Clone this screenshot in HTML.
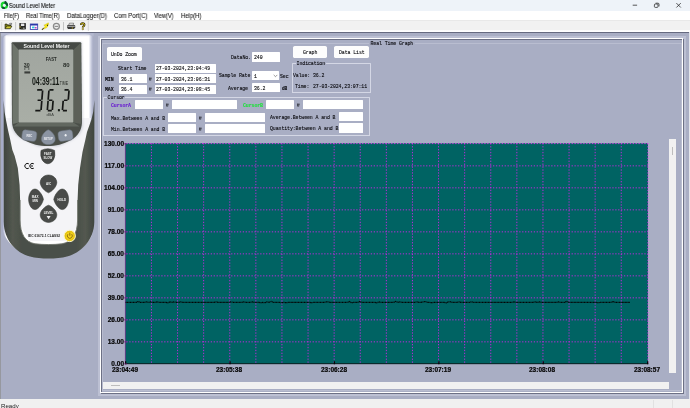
<!DOCTYPE html>
<html>
<head>
<meta charset="utf-8">
<title>Sound Level Meter</title>
<style>
*{box-sizing:border-box;margin:0;padding:0}
html,body{width:690px;height:408px;overflow:hidden;background:#a9aec4;font-family:"Liberation Sans",sans-serif}
.abs{position:absolute}
#titlebar{position:absolute;left:0;top:0;width:690px;height:11px;background:#eef3f9}
#menubar{position:absolute;left:0;top:11px;width:690px;height:9px;background:#ffffff}
#toolbar{position:absolute;left:0;top:20px;width:690px;height:12px;background:linear-gradient(#d6d6d6 0,#d6d6d6 0.3px,#f1f1f1 0.6px,#f1f1f1 10.2px,#ffffff 10.6px,#ffffff 12px)}
#tbline{z-index:5;position:absolute;left:0;top:31.5px;width:689px;height:0.9px;background:#666a80}
#main{position:absolute;left:0;top:32px;width:689px;height:366.9px;background:#a9aec4}
#rightedge{position:absolute;left:688.8px;top:32px;width:1.2px;height:366.9px;background:#e4e6ec}
#status{position:absolute;left:0;top:398.7px;width:690px;height:9.3px;background:#f0f0f0}
.t,.m,.yl,.xl{will-change:transform}
.t{position:absolute;white-space:pre;color:#111;line-height:1}
.menu{font-size:6.3px;top:12.9px;color:#0e0e0e;-webkit-text-stroke:0.06px}
.m{position:absolute;white-space:pre;font-family:"Liberation Mono",monospace;font-size:4.9px;letter-spacing:-0.09px;line-height:6px;color:#08080c;margin-top:1.1px;transform:scaleY(1.25);transform-origin:50% 55%;-webkit-text-stroke:0.09px}
.at{transform:scaleY(0.95)!important;font-weight:bold;font-size:4.2px!important;margin-top:-0.2px!important}
.in{position:absolute;background:#fff;border-radius:0.5px}
.btn{position:absolute;background:#fdfdfd;border-radius:1.6px;box-shadow:0 0 0.5px rgba(120,125,150,.6)}
.gb{position:absolute;border:0.8px solid rgba(226,229,240,.74);border-radius:0.5px}
.yl{-webkit-text-stroke:0.22px #000;position:absolute;font-weight:bold;font-size:6.5px;line-height:7px;text-align:right;width:30px;left:94.1px;color:#0a0a0a}
.xl{-webkit-text-stroke:0.22px #000;position:absolute;font-weight:bold;font-size:6.5px;line-height:7px;text-align:center;width:40px;top:366.2px;margin-left:-0.7px;color:#0a0a0a}
</style>
</head>
<body>
<div id="titlebar"></div>
<div id="menubar"></div>
<div id="toolbar"></div>
<div id="main"></div>
<div id="tbline"></div>
<div id="rightedge"></div>
<div id="status"></div>


<!-- DEVICE -->
<div class="abs" style="left:0;top:32.3px;width:0.9px;height:366.6px;background:#96989f"></div>
<svg class="abs" style="left:0;top:32px" width="100" height="234" viewBox="0 32 100 234">
<defs>
<linearGradient id="bodyg" gradientUnits="userSpaceOnUse" x1="1.2" y1="0" x2="95.3" y2="0">
<stop offset="0" stop-color="#a3a9c8"/><stop offset="0.012" stop-color="#a3a9c8"/><stop offset="0.03" stop-color="#c4c8dc"/><stop offset="0.052" stop-color="#ffffff"/>
<stop offset="0.5" stop-color="#ffffff"/><stop offset="0.93" stop-color="#ffffff"/><stop offset="0.955" stop-color="#c9cde0"/><stop offset="0.975" stop-color="#a9aec6"/><stop offset="1" stop-color="#a9aec4"/>
</linearGradient>
<linearGradient id="holg" gradientUnits="userSpaceOnUse" x1="3.5" y1="0" x2="94.5" y2="0">
<stop offset="0" stop-color="#3f443e"/><stop offset="0.1" stop-color="#535850"/><stop offset="0.2" stop-color="#4a4f48"/>
<stop offset="0.8" stop-color="#4a4f48"/><stop offset="0.9" stop-color="#535850"/><stop offset="1" stop-color="#3f443e"/>
</linearGradient>
<linearGradient id="lcdg" x1="0" y1="0" x2="0" y2="1">
<stop offset="0" stop-color="#a1a6a0"/><stop offset="1" stop-color="#a9aea6"/>
</linearGradient>
<linearGradient id="topfade" x1="0" y1="0" x2="0" y2="1"><stop offset="0" stop-color="#a9aec8" stop-opacity="1"/><stop offset="0.3" stop-color="#b4b9d2" stop-opacity="0.85"/><stop offset="1" stop-color="#d0d4e4" stop-opacity="0"/></linearGradient>
<filter id="soft" x="-5%" y="-5%" width="110%" height="110%"><feGaussianBlur stdDeviation="0.35"/></filter>
<filter id="soft2" x="-5%" y="-5%" width="110%" height="110%"><feGaussianBlur stdDeviation="0.8"/></filter>
</defs>
<g filter="url(#soft)">
<!-- body -->
<path d="M1.6 222 V44 Q1.6 33.8 12.5 33.8 H84.5 Q95 33.8 95 44 V222 C95 240 80 252 66 255 H32 C16 252 1.6 240 1.6 222 Z" fill="url(#bodyg)"/>
<rect x="1" y="32.5" width="92.6" height="4.4" fill="url(#topfade)"/>
<!-- shading of body near bezel bottom -->
<path d="M6 118 L10 140 L17 168 L19.5 200 L19.5 225 L30 241 H68 L78 225 L78 200 L80 168 L86 140 L91 118 Z" fill="#f4f4f7"/>
<!-- holster -->
<path d="M3.6 100 L3.7 222 C4 240 16 253 30 256.5 C40 259.2 57 259.2 67 256.5 C81 253 94 240 94.3 222 L94.4 100
 L93.2 112 L91.3 120 L87 132 L85.3 140 L82.5 152 L80 168 L78.2 185 L77.6 200 L77.6 220 C77.4 234 72 242 62 243.8 C54 244.8 43 244.8 35 243.8 C25 242 20.2 234 20.1 220 L20.1 200 L19.6 185 L17.8 168 L14.7 156 L12.4 150 L10.3 140 L8 130 L6 120 L4.6 112 Z" fill="url(#holg)"/>
<path d="M77.6 200 L77.6 220 C77.4 234 72 242 62 243.8 C54 244.8 43 244.8 35 243.8 C25 242 20.2 234 20.1 220 L20.1 200" fill="none" stroke="#6f746c" stroke-width="0.9"/>
<!-- bezel shadow -->
<path d="M11.4 42 H82 L83 124 C83 132 78 137 72 140 L58 146.5 H38 L24 140 C17 137 11.4 132 11.4 124 Z" fill="#c9ccd4" filter="url(#soft2)" opacity="0.8"/>
<!-- bezel -->
<path d="M12.4 42.3 H80.4 Q81.2 42.3 81.3 43.2 L82 122 C81.8 130 78 136 71 140 C63 144.4 56 146 47.5 146 C39 146 32 144.4 24 140 C17 136 12.2 130 12 122 L11.6 43.2 Q11.7 42.3 12.4 42.3 Z" fill="#4b504a"/>
<!-- bezel bevels -->
<path d="M12.4 43 L18.6 49.6 V122.6 L12.6 124 Z" fill="#6e746c"/>
<path d="M80.6 43 L73.3 49.6 V122.6 L81.6 124 Z" fill="#5b6159"/>
<path d="M12.6 42.8 H80.4 L73.3 49.7 H18.6 Z" fill="#454a45"/>
<path d="M18.6 122.4 H73.3 L79.5 126.6 H13.4 Z" fill="#626860"/>
<!-- LCD -->
<rect x="18.6" y="49.6" width="54.7" height="73" rx="0.8" fill="url(#lcdg)"/>
<!-- top text -->
<text x="46.5" y="47.9" font-family="Liberation Sans" font-weight="bold" font-size="5.4" fill="#f4f4f4" text-anchor="middle" textLength="46" lengthAdjust="spacingAndGlyphs">Sound Level Meter</text>
<!-- LCD contents -->
<g fill="#161a16" font-family="Liberation Sans">
<text x="51.2" y="60.8" font-size="5" font-weight="bold" text-anchor="middle" textLength="11" lengthAdjust="spacingAndGlyphs" fill="#2a2e2a">FAST</text>
<text x="23.8" y="66.7" font-size="6" font-weight="bold" textLength="5.9" lengthAdjust="spacingAndGlyphs" fill="#2a2e2a">30</text>
<text x="63" y="66.7" font-size="6" font-weight="bold" textLength="6.7" lengthAdjust="spacingAndGlyphs" fill="#2a2e2a">80</text>
<path d="M24.8 70 V67.4 H28.8 V70" fill="none" stroke="#2a2e2a" stroke-width="0.6"/>
<rect x="24.4" y="71.4" width="5.8" height="2.1" fill="#3a3e3a"/>
<text x="32" y="84.7" font-size="10.6" font-weight="bold" textLength="27.3" lengthAdjust="spacingAndGlyphs">04:39:11</text>
<text x="59.7" y="84.7" font-size="5.6" textLength="8.3" lengthAdjust="spacingAndGlyphs" fill="#2a2e2a">TIME</text>
<text x="46.4" y="116.3" font-size="3.6" textLength="7.4" lengthAdjust="spacingAndGlyphs" fill="#3a3e3a">dBA</text>
</g>
<!-- 7-seg digits -->
<g fill="none" stroke="#151915" stroke-width="1.7" stroke-linecap="butt">
<path transform="translate(36.0,110.7) skewX(-4.6)" d="M0.45 -20.9 H4.55 M5.0 -20.15 V-11.0 M5.0 -9.899999999999999 V-0.75 M0.45 0 H4.55 M0.75 -10.45 H4.25 M-0.5 -20.9 H0.75 M-0.7 0 H0.75"/>
<path transform="translate(47.3,110.7) skewX(-4.6)" d="M0.45 -20.9 H4.55 M0 -20.15 V-11.0 M0 -9.899999999999999 V-0.75 M0.45 0 H4.55 M5.0 -9.899999999999999 V-0.75 M0.75 -10.45 H4.25"/>
<path transform="translate(62.4,110.7) skewX(-4.6)" d="M0.45 -20.9 H4.55 M5.0 -20.15 V-11.0 M0.75 -10.45 H4.25 M0 -9.899999999999999 V-0.75 M0.45 0 H4.55"/>
</g>
<rect x="57.9" y="109.1" width="2" height="2.2" fill="#171b17"/>
<!-- small buttons -->
<g fill="#8b94a2" stroke="#6c7480" stroke-width="0.5">
<rect x="22" y="130.4" width="14.6" height="10.4" rx="3.6" transform="rotate(8 29.3 135.6)"/>
<rect x="58.2" y="130.4" width="14.6" height="10.4" rx="3.6" transform="rotate(-8 65.5 135.6)"/>
<path d="M48.3 129.8 C51 130.6 55.2 135 55.2 139 C55.2 142.6 52 144.6 48.3 144.6 C44.6 144.6 41.4 142.6 41.4 139 C41.4 135 45.6 130.6 48.3 129.8 Z"/>
</g>
<g fill="#eef0f4" font-family="Liberation Sans" font-weight="bold" font-size="2.8" text-anchor="middle">
<text x="29.4" y="136.6">REC</text>
<text x="48.3" y="140">SETUP</text>
<ellipse cx="65.6" cy="135.3" rx="1" ry="1.3"/>
</g>
<!-- FAST/SLOW -->
<path d="M41 150.4 Q47.8 147 54.6 150.4 Q55.6 156 53.4 160 Q51 163.8 47.8 163.8 Q44.6 163.8 42.2 160 Q40 156 41 150.4 Z" fill="#474a47" stroke="#2e312e" stroke-width="0.5"/>
<g fill="#f0f0f0" font-family="Liberation Sans" font-weight="bold" font-size="2.9" text-anchor="middle">
<text x="47.8" y="154.8">FAST</text><text x="47.8" y="159">SLOW</text>
</g>
<!-- CE -->
<g fill="none" stroke="#101010" stroke-width="1">
<path d="M28.8 163.8 A2.6 2.6 0 1 0 28.8 168.2"/>
<path d="M33.8 163.8 A2.6 2.6 0 1 0 33.8 168.2 M30.6 166 H33"/>
</g>
<!-- round buttons -->
<g fill="#494c49" stroke="#2f322f" stroke-width="0.5">
<path d="M48.5 175 C53 175 56.8 178.4 56.8 182.6 C56.8 186.6 52 191.6 48.5 192.8 C45 191.6 40.2 186.6 40.2 182.6 C40.2 178.4 44 175 48.5 175 Z"/>
<path d="M48.5 222.4 C53 222.4 56.8 219 56.8 214.8 C56.8 210.8 52 206.2 48.5 205.2 C45 206.2 40.2 210.8 40.2 214.8 C40.2 219 44 222.4 48.5 222.4 Z"/>
<path d="M28.6 199.3 C28.6 194 31.4 189 35 189 C38.6 189 42.8 195.4 43.4 199.3 C42.8 203.2 38.6 209.6 35 209.6 C31.4 209.6 28.6 204.6 28.6 199.3 Z"/>
<path d="M68.6 199.3 C68.6 194 65.8 189 62.2 189 C58.6 189 54.4 195.4 53.8 199.3 C54.4 203.2 58.6 209.6 62.2 209.6 C65.8 209.6 68.6 204.6 68.6 199.3 Z"/>
</g>
<g fill="#f0f0f0" font-family="Liberation Sans" font-weight="bold" font-size="3" text-anchor="middle">
<text x="48.5" y="185">A/C</text>
<text x="35.2" y="198">MAX</text><text x="35.2" y="202.4">MIN</text>
<text x="61.8" y="200.6">HOLD</text>
<text x="48.6" y="214.4">LEVEL</text>
<path d="M46.6 216 H50.6 L48.6 219.2 Z"/>
</g>
<text x="28.2" y="236.8" font-family="Liberation Sans" font-weight="bold" font-size="2.9" fill="#222" textLength="32" lengthAdjust="spacingAndGlyphs">IEC 61672-1 CLASS2</text>
<!-- power -->
<circle cx="69.7" cy="235.9" r="5.7" fill="#f2d21c" stroke="#fbf6d0" stroke-width="1"/>
<circle cx="69.7" cy="235.9" r="4.4" fill="#f4d31a" stroke="#c9a70e" stroke-width="0.5"/>
<path d="M67.9 234.2 A2.5 2.5 0 1 0 71.7 234.2 M69.8 232.6 V235.8" fill="none" stroke="#6a4a10" stroke-width="0.7"/>
</g>
</svg>


<!-- ICONS -->
<svg class="abs" style="left:0;top:0" width="690" height="33" viewBox="0 0 690 33">
<!-- app icon -->
<g fill="none">
<circle cx="4.35" cy="5.35" r="2.7" stroke="#16d62c" stroke-width="2.1"/>
<path d="M4.35 2.65 A2.7 2.7 0 0 1 7.05 5.8" stroke="#0f4a36" stroke-width="2.1"/>
<path d="M2.2 7.1 A2.7 2.7 0 0 0 4.8 8" stroke="#0f4a36" stroke-width="2.1"/>
<path d="M4.9 1.2 L6.3 0.9 L6 2.6 Z" fill="#082818"/>
</g>
<!-- window controls -->
<g stroke="#222" stroke-width="0.75" fill="none">
<path d="M632.7 5.2 H637.1"/>
<rect x="654.4" y="4" width="3.6" height="3.4" rx="0.9"/>
<path d="M655.6 3.2 H658 Q659 3.2 659 4.2 V6.4"/>
<path d="M676.4 3.1 L680.8 7.5 M680.8 3.1 L676.4 7.5"/>
</g>
<!-- toolbar gripper + separators -->
<path d="M1.6 22 V30.4" stroke="#c4c4c4" stroke-width="0.5"/>
<path d="M15.6 22 V30.4 M63.5 22 V30.4" stroke="#a8a8a8" stroke-width="0.6"/>
<path d="M88.3 20.6 V31" stroke="#c2c2c2" stroke-width="0.6"/>
<!-- open folder -->
<g>
<path d="M5.1 28.6 V24.1 H7 L7.6 24.9 H10.5 V26.2" fill="#85851a" stroke="#1c1c08" stroke-width="0.7"/>
<path d="M5.1 28.7 L6.7 26 H11.9 L10.3 28.7 Z" fill="#d2cc34" stroke="#1c1c08" stroke-width="0.7"/>
<path d="M9.2 23.6 Q10.6 22.8 11.4 24 M11.6 22.9 V24.3 H10.3" fill="none" stroke="#222" stroke-width="0.5"/>
</g>
<!-- save -->
<g>
<rect x="19.4" y="23.1" width="6.4" height="6.2" fill="#141414"/>
<rect x="20.8" y="23.5" width="3.6" height="2.6" fill="#e6e6e6"/>
<rect x="20.8" y="27.3" width="3.6" height="2" fill="#3c3c30"/>
<rect x="23.5" y="27.5" width="0.9" height="1.6" fill="#d8d8d8"/>
<rect x="19.6" y="26" width="0.9" height="1.8" fill="#b8a830"/>
</g>
<!-- window -->
<g>
<rect x="30.3" y="24" width="7.4" height="5.5" fill="#ffffff" stroke="#2a36a8" stroke-width="0.8"/>
<rect x="30.3" y="24" width="7.4" height="1.5" fill="#2a36a8"/>
<rect x="32" y="26.6" width="2.6" height="1.7" fill="#28c8e0"/>
<rect x="34.8" y="26.9" width="1.8" height="1.6" fill="#c040c0"/>
</g>
<!-- lightning -->
<g>
<path d="M48.4 22.8 L43.8 25.2 L45.3 26.2 L42.1 29.8 L46.4 27.8 L47.2 27.2 L48.6 24.2 Z" fill="#fbea10" stroke="#b8a410" stroke-width="0.35"/>
<path d="M42.1 29.8 L43.6 27.9" stroke="#151515" stroke-width="0.9"/>
<rect x="46.9" y="24.7" width="1.1" height="1.1" fill="#1a1a1a"/>
</g>
<!-- circle minus -->
<circle cx="56.4" cy="26.3" r="3.0" fill="#ececec" stroke="#8a8a8a" stroke-width="1.25"/>
<path d="M54.6 26.4 H58.2" stroke="#8a8a8a" stroke-width="1.1"/>
<!-- printer -->
<g>
<path d="M68.6 25.2 L69.4 23.2 H73.6 L73.2 25.2 Z" fill="#f4f4f4" stroke="#333" stroke-width="0.5"/>
<path d="M67.2 25.6 Q67.2 25 68 25 H74.4 Q75.2 25 75.2 25.8 V27.6 L74 28.9 H68 L67.2 27.6 Z" fill="#3a3a3a"/>
<path d="M67.6 26.3 H74.8" stroke="#c4c4c4" stroke-width="0.9"/>
<rect x="71.8" y="27.6" width="1.3" height="0.8" fill="#e8c820"/>
</g>
<!-- question -->
<g>
<path d="M81 24.9 Q81 23.3 82.7 23.3 Q84.4 23.3 84.4 24.8 Q84.4 25.8 83.4 26.3 Q82.8 26.7 82.8 27.6" fill="none" stroke="#2a2408" stroke-width="2.0"/>
<path d="M81 24.9 Q81 23.3 82.7 23.3 Q84.4 23.3 84.4 24.8 Q84.4 25.8 83.4 26.3 Q82.8 26.7 82.8 27.6" fill="none" stroke="#f0d820" stroke-width="0.8"/>
<circle cx="82.8" cy="29" r="0.85" fill="#f0d820" stroke="#3a3010" stroke-width="0.4"/>
</g>
</svg>


<div class="abs" style="left:653.4px;top:399.5px;width:0.6px;height:8.5px;background:#e1e1e1"></div>
<div class="abs" style="left:672.2px;top:399.5px;width:0.6px;height:8.5px;background:#e1e1e1"></div>

<!-- TITLE -->
<div class="t" style="left:9.2px;top:3.25px;font-size:6.3px;color:#0a0a0a;transform:scaleX(0.872);transform-origin:0 0;-webkit-text-stroke:0.08px">Sound Level Meter</div>
<!-- MENU -->
<div class="t menu" style="left:3.7px;transform:scaleX(0.83);transform-origin:0 0">File(F)</div>
<div class="t menu" style="left:25.8px;transform:scaleX(0.905);transform-origin:0 0">Real Time(R)</div>
<div class="t menu" style="left:66.7px;transform:scaleX(0.96);transform-origin:0 0">DataLogger(D)</div>
<div class="t menu" style="left:113.7px;transform:scaleX(0.948);transform-origin:0 0">Com Port(C)</div>
<div class="t menu" style="left:154.2px;transform:scaleX(0.884);transform-origin:0 0">View(V)</div>
<div class="t menu" style="left:180.8px;transform:scaleX(0.94);transform-origin:0 0">Help(H)</div>
<div class="t" style="left:1px;top:402.6px;font-size:6px;color:#1a1a1a;transform:scaleX(1.02);transform-origin:0 0">Ready</div>

<!-- PANEL FRAME -->
<div class="abs" style="left:98px;top:36.4px;width:588px;height:359.2px;background:#bcc0d3"></div>
<div class="abs" style="left:100.8px;top:39.3px;width:583.3px;height:354.6px;border:0.9px solid #6c7085;background:#a9aec4"></div>
<div class="abs" style="left:99.6px;top:38.2px;width:583.6px;height:354.8px;border:1.2px solid #ffffff"></div>
<!-- group line -->
<div class="abs" style="left:102px;top:43px;width:680.2px;height:0"></div>
<div class="abs" style="left:102px;top:43px;width:579.6px;height:348.4px;border:0.9px solid #b9bdd0"></div>
<div class="m" style="left:369px;top:39.6px;background:#a9aec4;padding:0 1.5px">Real Time Graph</div>


<!-- FORM CONTROLS -->
<div class="btn" style="left:107.2px;top:47.2px;width:35px;height:13.6px"></div>
<div class="m" style="left:111.4px;top:51.2px">UnDo Zoom</div>

<div class="m" style="left:117.7px;top:65.4px">Start Time</div>
<div class="in" style="left:155px;top:64px;width:61.2px;height:8.6px"></div>
<div class="m" style="left:155.7px;top:65.4px">27-03-2024,23:04:49</div>

<div class="m" style="left:104.8px;top:76px;font-weight:bold">MIN</div>
<div class="in" style="left:119.2px;top:74.3px;width:27.7px;height:9px"></div>
<div class="m" style="left:121px;top:76px">36.1</div>
<div class="m at" style="left:149.3px;top:76.3px">@</div>
<div class="in" style="left:155px;top:74.3px;width:61.2px;height:9px"></div>
<div class="m" style="left:155.7px;top:76px">27-03-2024,23:06:31</div>

<div class="m" style="left:104.8px;top:86.2px;font-weight:bold">MAX</div>
<div class="in" style="left:119.2px;top:84.7px;width:27.7px;height:9px"></div>
<div class="m" style="left:121px;top:86.2px">36.4</div>
<div class="m at" style="left:149.3px;top:86.5px">@</div>
<div class="in" style="left:155px;top:84.7px;width:61.2px;height:9px"></div>
<div class="m" style="left:155.7px;top:86.2px">27-03-2024,23:08:45</div>

<div class="m" style="left:230.7px;top:54.4px">DataNo.</div>
<div class="in" style="left:251.8px;top:52.3px;width:28.3px;height:9.3px"></div>
<div class="m" style="left:253.6px;top:54.4px">240</div>

<div class="m" style="left:219.4px;top:72.3px">Sample Rate</div>
<div class="in" style="left:252.3px;top:71px;width:27.2px;height:8.8px"></div>
<div class="m" style="left:254px;top:72.5px">1</div>
<svg class="abs" style="left:272.5px;top:73.6px" width="5" height="4" viewBox="0 0 5 4"><path d="M0.7 0.9 L2.5 2.7 L4.3 0.9" fill="none" stroke="#555" stroke-width="0.6"/></svg>
<div class="m" style="left:280.3px;top:73.4px">Sec</div>

<div class="m" style="left:228.4px;top:84.8px">Average</div>
<div class="in" style="left:251.8px;top:83.3px;width:28.3px;height:9px"></div>
<div class="m" style="left:253.6px;top:84.8px">36.2</div>
<div class="m" style="left:282.2px;top:85.4px;font-weight:bold;font-size:4.4px">dB</div>

<div class="btn" style="left:292.7px;top:46.2px;width:34.2px;height:11.6px"></div>
<div class="m" style="left:302.6px;top:49.2px">Graph</div>
<div class="btn" style="left:334.4px;top:46.2px;width:34.2px;height:11.6px"></div>
<div class="m" style="left:338.8px;top:49.2px">Data List</div>

<!-- Indication group -->
<div class="gb" style="left:292.4px;top:63.4px;width:78.3px;height:29.2px"></div>
<div class="m" style="left:295.6px;top:60.4px;background:#a9aec4;padding:0 0.6px">Indication</div>
<div class="m" style="left:293.4px;top:72.2px">Value: 36.2</div>
<div class="m" style="left:294.8px;top:82.9px">Time:</div><div class="m" style="left:313.2px;top:83.2px">27-03-2024,23:07:11</div>

<!-- Cursor group -->
<div class="gb" style="left:103.4px;top:97.4px;width:266.8px;height:38.4px"></div>
<div class="m" style="left:107.2px;top:94.2px;background:#a9aec4;padding:0 0.6px">Cursor</div>

<div class="m" style="left:110.7px;top:102.4px;color:#6a1fd0;font-weight:bold">CursorA</div>
<div class="in" style="left:135px;top:100.3px;width:28.4px;height:9.2px"></div>
<div class="m at" style="left:166px;top:101.7px">@</div>
<div class="in" style="left:171.7px;top:100.3px;width:65.2px;height:9.2px"></div>
<div class="m" style="left:243.4px;top:102.4px;color:#1ee03a;font-weight:bold">CursorB</div>
<div class="in" style="left:266.4px;top:100.3px;width:27.8px;height:9.2px"></div>
<div class="m at" style="left:297px;top:101.7px">@</div>
<div class="in" style="left:302.7px;top:100.3px;width:60.2px;height:9.2px"></div>

<div class="m" style="left:110.7px;top:115px">Max.Between A and B</div>
<div class="in" style="left:167.7px;top:112.8px;width:28.2px;height:9.2px"></div>
<div class="m at" style="left:199.4px;top:115px">@</div>
<div class="in" style="left:204.6px;top:112.8px;width:60.7px;height:9.2px"></div>
<div class="m" style="left:270px;top:113.8px">Average.Between A and B</div>
<div class="in" style="left:339px;top:112px;width:23.8px;height:9.2px"></div>

<div class="m" style="left:110.7px;top:126.2px">Min.Between A and B</div>
<div class="in" style="left:167.7px;top:123.8px;width:28.2px;height:9.2px"></div>
<div class="m at" style="left:199.4px;top:125.8px">@</div>
<div class="in" style="left:204.6px;top:123.8px;width:60.7px;height:9.2px"></div>
<div class="m" style="left:270px;top:125.2px">Quantity:Between A and B</div>
<div class="in" style="left:339px;top:123.4px;width:23.8px;height:9.2px"></div>

<!-- CHART -->
<svg class="abs" style="left:0;top:0" width="690" height="408" viewBox="0 0 690 408">
<rect x="125.1" y="143.2" width="522.90" height="220.70" fill="#006363"/>
<path d="M151.45 143.2 V363.90 M177.55 143.2 V363.90 M203.65 143.2 V363.90 M229.75 143.2 V363.90 M255.85 143.2 V363.90 M281.95 143.2 V363.90 M308.05 143.2 V363.90 M334.15 143.2 V363.90 M360.25 143.2 V363.90 M386.35 143.2 V363.90 M412.45 143.2 V363.90 M438.55 143.2 V363.90 M464.65 143.2 V363.90 M490.75 143.2 V363.90 M516.85 143.2 V363.90 M542.95 143.2 V363.90 M569.05 143.2 V363.90 M595.15 143.2 V363.90 M621.25 143.2 V363.90 M647.80 143.2 V363.90 M126.35 165.85 H648.00 M126.35 187.85 H648.00 M126.35 209.85 H648.00 M126.35 231.85 H648.00 M126.35 253.85 H648.00 M126.35 275.85 H648.00 M126.35 297.85 H648.00 M126.35 319.85 H648.00 M126.35 341.85 H648.00" stroke="#ea1cfa" stroke-width="0.78" stroke-dasharray="1.3 1.61" fill="none"/>
<path d="M126.35 143.60 H648.00" stroke="#f230f8" stroke-width="0.9" stroke-dasharray="1.3 1.61" fill="none"/>
<path d="M125.35 143.2 V363.90" stroke="#98209a" stroke-width="0.6" fill="none"/>
<path d="M125.0 363.70 H648.30" stroke="#061414" stroke-width="0.9" fill="none"/>
<path d="M125.65 361.30 V364.20 M230.05 361.30 V364.20 M334.45 361.30 V364.20 M438.85 361.30 V364.20 M543.25 361.30 V364.20 M647.65 361.30 V364.20" stroke="#050505" stroke-width="1.25" fill="none"/>
<path d="M124.00 143.85 H126.90 M124.00 165.85 H126.90 M124.00 187.85 H126.90 M124.00 209.85 H126.90 M124.00 231.85 H126.90 M124.00 253.85 H126.90 M124.00 275.85 H126.90 M124.00 297.85 H126.90 M124.00 319.85 H126.90 M124.00 341.85 H126.90 M124.00 363.85 H126.90" stroke="#7a1a80" stroke-width="0.7" fill="none"/>
<polyline points="125.60,302.39 127.71,302.39 129.82,302.39 131.93,302.39 134.04,302.39 136.15,302.39 138.26,301.49 140.37,302.39 142.48,302.39 144.59,302.39 146.70,301.89 148.82,302.39 150.93,301.89 153.04,302.39 155.15,302.39 157.26,301.89 159.37,302.39 161.48,302.39 163.59,302.39 165.70,302.39 167.81,302.74 169.92,301.89 172.03,302.39 174.14,301.89 176.25,302.39 178.36,302.39 180.47,301.89 182.58,302.39 184.69,302.39 186.80,302.39 188.91,302.39 191.02,302.39 193.13,302.39 195.25,302.39 197.36,302.39 199.47,302.39 201.58,302.39 203.69,302.39 205.80,302.39 207.91,302.39 210.02,302.39 212.13,302.39 214.24,302.39 216.35,301.89 218.46,302.39 220.57,302.39 222.68,302.39 224.79,302.39 226.90,302.39 229.01,302.39 231.12,301.89 233.23,302.39 235.34,302.39 237.45,302.39 239.56,302.39 241.68,302.39 243.79,301.89 245.90,302.39 248.01,302.39 250.12,302.39 252.23,301.89 254.34,302.39 256.45,302.39 258.56,302.39 260.67,302.74 262.78,302.39 264.89,302.74 267.00,301.89 269.11,302.39 271.22,301.49 273.33,302.39 275.44,302.39 277.55,302.39 279.66,302.39 281.77,302.74 283.88,302.39 285.99,302.74 288.11,302.39 290.22,302.39 292.33,302.39 294.44,302.39 296.55,302.39 298.66,302.39 300.77,302.39 302.88,302.39 304.99,302.39 307.10,302.39 309.21,302.39 311.32,302.74 313.43,302.39 315.54,302.39 317.65,302.39 319.76,302.39 321.87,302.39 323.98,302.39 326.09,301.89 328.20,301.89 330.31,302.39 332.43,302.39 334.54,302.39 336.65,302.39 338.76,302.39 340.87,302.39 342.98,302.39 345.09,302.39 347.20,302.39 349.31,301.49 351.42,302.74 353.53,302.39 355.64,302.39 357.75,302.39 359.86,301.49 361.97,302.39 364.08,302.39 366.19,302.39 368.30,302.39 370.41,302.39 372.52,302.39 374.63,302.39 376.74,302.74 378.86,301.89 380.97,302.39 383.08,302.39 385.19,302.39 387.30,302.39 389.41,302.39 391.52,302.39 393.63,302.39 395.74,301.49 397.85,302.39 399.96,301.89 402.07,302.39 404.18,302.39 406.29,302.39 408.40,302.39 410.51,302.39 412.62,302.39 414.73,302.39 416.84,301.89 418.95,302.39 421.06,302.39 423.17,301.89 425.29,301.49 427.40,302.39 429.51,302.39 431.62,302.74 433.73,302.39 435.84,302.39 437.95,302.39 440.06,302.39 442.17,302.39 444.28,302.39 446.39,302.74 448.50,301.89 450.61,301.89 452.72,302.39 454.83,302.39 456.94,302.39 459.05,301.89 461.16,302.39 463.27,302.39 465.38,302.39 467.49,302.39 469.61,302.39 471.72,301.89 473.83,302.39 475.94,302.39 478.05,302.39 480.16,302.39 482.27,302.39 484.38,302.39 486.49,302.39 488.60,302.39 490.71,302.39 492.82,302.39 494.93,302.39 497.04,302.39 499.15,302.39 501.26,302.39 503.37,302.39 505.48,302.39 507.59,302.39 509.70,302.39 511.81,302.39 513.92,301.89 516.04,302.39 518.15,302.39 520.26,302.39 522.37,302.39 524.48,302.39 526.59,302.39 528.70,302.39 530.81,302.39 532.92,302.39 535.03,301.89 537.14,302.39 539.25,301.89 541.36,302.39 543.47,302.39 545.58,302.39 547.69,302.39 549.80,302.39 551.91,302.39 554.02,302.39 556.13,302.39 558.24,301.89 560.35,302.39 562.47,302.39 564.58,302.39 566.69,301.49 568.80,302.39 570.91,302.39 573.02,302.39 575.13,302.39 577.24,302.39 579.35,302.39 581.46,302.39 583.57,302.39 585.68,302.39 587.79,302.39 589.90,302.39 592.01,302.39 594.12,302.39 596.23,302.39 598.34,302.74 600.45,302.39 602.56,302.39 604.67,302.39 606.78,302.39 608.90,302.39 611.01,302.39 613.12,301.49 615.23,302.39 617.34,302.39 619.45,302.39 621.56,302.39 623.67,302.39 625.78,302.39 627.89,302.39 630.00,302.39" stroke="#030505" stroke-width="1.25" stroke-dasharray="1.05 0.42" fill="none"/>
</svg>
<div class="yl" style="top:140.45px">130.00</div>
<div class="yl" style="top:162.45px">117.00</div>
<div class="yl" style="top:184.45px">104.00</div>
<div class="yl" style="top:206.45px">91.00</div>
<div class="yl" style="top:228.45px">78.00</div>
<div class="yl" style="top:250.45px">65.00</div>
<div class="yl" style="top:272.45px">52.00</div>
<div class="yl" style="top:294.45px">39.00</div>
<div class="yl" style="top:316.45px">26.00</div>
<div class="yl" style="top:338.45px">13.00</div>
<div class="yl" style="top:360.45px">0.00</div>
<div class="xl" style="left:105.55px">23:04:49</div>
<div class="xl" style="left:209.95px">23:05:38</div>
<div class="xl" style="left:314.35px">23:06:28</div>
<div class="xl" style="left:418.75px">23:07:19</div>
<div class="xl" style="left:523.15px">23:08:08</div>
<div class="xl" style="left:627.55px">23:08:57</div>
<div class="abs" style="left:103px;top:382.3px;width:566.2px;height:6.9px;background:#f1f1f1"></div>
<div class="abs" style="left:111.3px;top:385.4px;width:8.4px;height:0.6px;background:#bdbdbd"></div>
<div class="abs" style="left:669.2px;top:138.8px;width:7px;height:234px;background:#f1f1f1"></div>
<div class="abs" style="left:672.3px;top:146.5px;width:0.6px;height:8px;background:#bdbdbd"></div>
</body>
</html>
